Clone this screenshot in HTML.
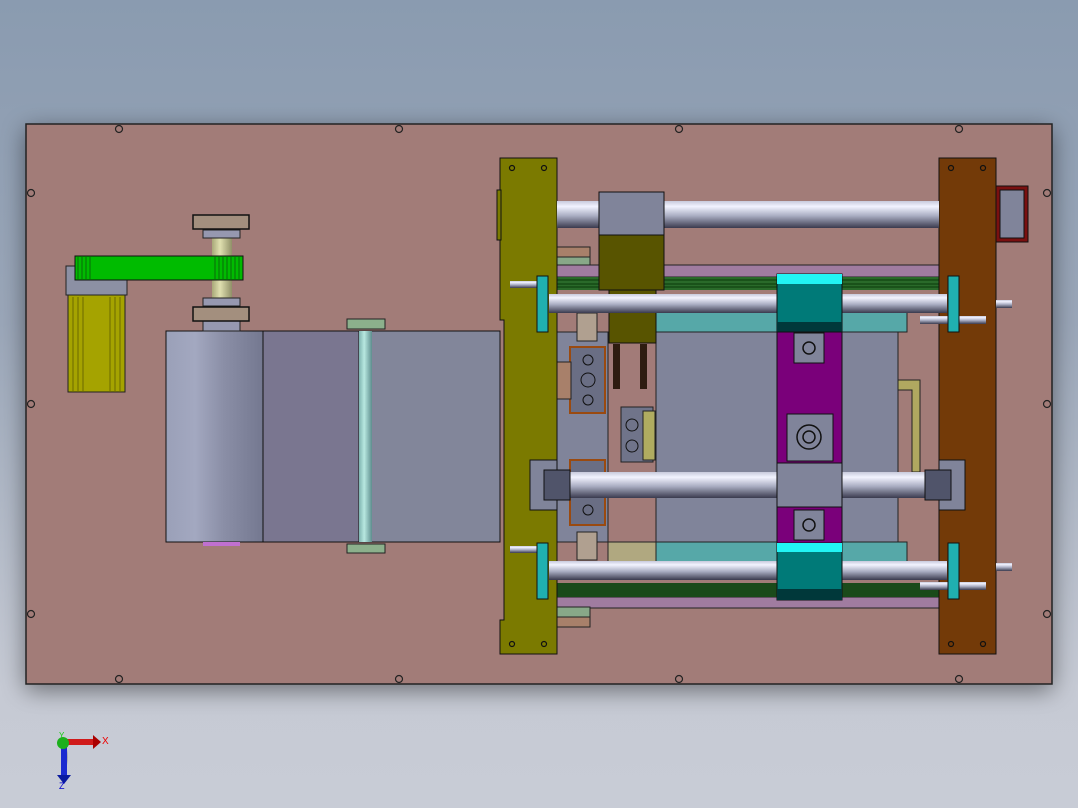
<!DOCTYPE html>
<html><head><meta charset="utf-8"><style>
html,body{margin:0;padding:0;width:1078px;height:808px;overflow:hidden;background:linear-gradient(#8a9bb0 0%,#9aa6b8 40%,#c6cad4 85%,#c8ccd6 100%);font-family:"Liberation Sans",sans-serif}
</style></head><body>
<svg width="1078" height="808" viewBox="0 0 1078 808" xmlns="http://www.w3.org/2000/svg">
<defs>
<linearGradient id="rod" x1="0" y1="0" x2="0" y2="1">
<stop offset="0" stop-color="#c8cadc"/><stop offset=".2" stop-color="#f2f3ff"/><stop offset=".55" stop-color="#a9adc2"/><stop offset="1" stop-color="#3a3a4e"/></linearGradient>
<linearGradient id="cyl" x1="0" y1="0" x2="1" y2="0">
<stop offset="0" stop-color="#9aa0b8"/><stop offset=".3" stop-color="#a3a8c0"/><stop offset=".6" stop-color="#8a8ea6"/><stop offset="1" stop-color="#747890"/></linearGradient>
<linearGradient id="vrod" x1="0" y1="0" x2="1" y2="0">
<stop offset="0" stop-color="#7fb4b0"/><stop offset=".4" stop-color="#b8e8e0"/><stop offset="1" stop-color="#5e8e8e"/></linearGradient>
<linearGradient id="shaft" x1="0" y1="0" x2="1" y2="0">
<stop offset="0" stop-color="#a8a878"/><stop offset=".4" stop-color="#e0e0b0"/><stop offset="1" stop-color="#909068"/></linearGradient>
<filter id="sh" x="-10%" y="-10%" width="120%" height="130%"><feDropShadow dx="0" dy="6" stdDeviation="12" flood-color="#000" flood-opacity=".45"/></filter>
</defs>
<rect x="26" y="124" width="1026" height="560" fill="#a27b78" stroke="#222" stroke-width="1.5" filter="url(#sh)"/>
<g fill="none" stroke="#222" stroke-width="1.2">
<circle cx="119" cy="129" r="3.5"/><circle cx="399" cy="129" r="3.5"/><circle cx="679" cy="129" r="3.5"/><circle cx="959" cy="129" r="3.5"/>
<circle cx="119" cy="679" r="3.5"/><circle cx="399" cy="679" r="3.5"/><circle cx="679" cy="679" r="3.5"/><circle cx="959" cy="679" r="3.5"/>
<circle cx="31" cy="193" r="3.5"/><circle cx="31" cy="404" r="3.5"/><circle cx="31" cy="614" r="3.5"/>
<circle cx="1047" cy="193" r="3.5"/><circle cx="1047" cy="404" r="3.5"/><circle cx="1047" cy="614" r="3.5"/>
</g>
<rect x="166" y="331" width="97" height="211" fill="url(#cyl)" stroke="#111"/>
<rect x="203" y="542" width="37" height="4" fill="#c070d0"/>
<rect x="263" y="331" width="96" height="211" fill="#7a7690" stroke="#111"/>
<rect x="359" y="331" width="141" height="211" fill="#82869a" stroke="#111"/>
<rect x="359" y="331" width="13" height="211" fill="url(#vrod)"/>
<rect x="347" y="319" width="38" height="10" fill="#8cb08c" stroke="#222"/>
<rect x="347" y="544" width="38" height="9" fill="#8cb08c" stroke="#222"/>
<rect x="68" y="295" width="57" height="97" fill="#a5a300" stroke="#222"/>
<path d="M73 297V392M78 297V392M83 297V392M110 297V392M115 297V392M120 297V392" stroke="#6a6800" stroke-width="1"/>
<rect x="66" y="266" width="61" height="29" fill="#8c90a4" stroke="#222"/>
<rect x="212" y="237" width="20" height="61" fill="url(#shaft)"/>
<rect x="203" y="230" width="37" height="8" fill="#9698b0" stroke="#222"/>
<rect x="203" y="298" width="37" height="8" fill="#9698b0" stroke="#222"/>
<rect x="203" y="321" width="37" height="10" fill="#9698b0" stroke="#222"/>
<rect x="193" y="215" width="56" height="14" fill="#a38f7e" stroke="#111" stroke-width="1.5"/>
<rect x="193" y="307" width="56" height="14" fill="#a38f7e" stroke="#111" stroke-width="1.5"/>
<rect x="75" y="256" width="168" height="24" fill="#00bb00" stroke="#111"/>
<path d="M78 257V279M82 257V279M86 257V279M90 257V279M215 257V279M219 257V279M223 257V279M227 257V279M231 257V279M235 257V279M239 257V279" stroke="#0a6a0a"/>
<rect x="557" y="265" width="382" height="12" fill="#a07ca0" stroke="#222"/>
<rect x="557" y="277" width="382" height="13" fill="#2a6a2a"/>
<path d="M557 280H939M557 284H939M557 287H939" stroke="#0a3a0a"/>
<rect x="557" y="597" width="382" height="11" fill="#a07ca0" stroke="#222"/>
<rect x="557" y="583" width="382" height="14" fill="#1a4a1a"/>
<rect x="557" y="247" width="33" height="10" fill="#a8806a" stroke="#222"/>
<rect x="557" y="257" width="33" height="8" fill="#88a888" stroke="#222"/>
<rect x="557" y="607" width="33" height="10" fill="#88a888" stroke="#222"/>
<rect x="557" y="617" width="33" height="10" fill="#a8806a" stroke="#222"/>
<rect x="557" y="332" width="51" height="210" fill="#80849a" stroke="#222"/>
<rect x="608" y="332" width="48" height="210" fill="#a27b78" stroke="#222"/>
<rect x="613" y="344" width="7" height="45" fill="#2e1c10"/>
<rect x="640" y="344" width="7" height="45" fill="#2e1c10"/>
<rect x="656" y="332" width="242" height="210" fill="#80849a" stroke="#222"/>
<rect x="656" y="312" width="251" height="20" fill="#56a8a8" stroke="#222"/>
<rect x="656" y="542" width="251" height="20" fill="#56a8a8" stroke="#222"/>
<rect x="608" y="542" width="48" height="20" fill="#b0a880" stroke="#222"/>
<path d="M898 380H920V472H912V390H898Z" fill="#b0a860" stroke="#222"/>
<rect x="570" y="347" width="35" height="66" fill="#6a6e84" stroke="#9a4a10" stroke-width="2"/>
<rect x="570" y="460" width="35" height="65" fill="#6a6e84" stroke="#9a4a10" stroke-width="2"/>
<rect x="557" y="362" width="14" height="37" fill="#a8806a" stroke="#222"/>
<rect x="577" y="313" width="20" height="28" fill="#b0a090" stroke="#222"/>
<rect x="577" y="532" width="20" height="28" fill="#b0a090" stroke="#222"/>
<rect x="621" y="407" width="32" height="55" fill="#70748a" stroke="#222"/>
<rect x="643" y="411" width="12" height="49" fill="#b0ac60" stroke="#222"/>
<g fill="none" stroke="#111"><circle cx="588" cy="360" r="5"/><circle cx="588" cy="380" r="7"/><circle cx="588" cy="400" r="5"/><circle cx="632" cy="425" r="6"/><circle cx="632" cy="446" r="6"/><circle cx="588" cy="510" r="5"/></g>
<!-- plates -->
<path d="M500 158H557V654H500V620H504V320H500Z" fill="#7b7a00" stroke="#111"/>
<rect x="497" y="190" width="4" height="50" fill="#7b7a00" stroke="#111"/>
<rect x="939" y="158" width="57" height="496" fill="#733a08" stroke="#111"/>
<rect x="996" y="186" width="32" height="56" fill="#7a1010" stroke="#111"/>
<rect x="1000" y="190" width="24" height="48" fill="#80849a" stroke="#111"/>
<g fill="none" stroke="#111" stroke-width="1.2">
<circle cx="512" cy="168" r="2.5"/><circle cx="544" cy="168" r="2.5"/><circle cx="512" cy="644" r="2.5"/><circle cx="544" cy="644" r="2.5"/>
<circle cx="951" cy="168" r="2.5"/><circle cx="983" cy="168" r="2.5"/><circle cx="951" cy="644" r="2.5"/><circle cx="983" cy="644" r="2.5"/>
</g>
<rect x="557" y="201" width="382" height="27" fill="url(#rod)"/>
<rect x="599" y="192" width="65" height="43" fill="#80849a" stroke="#111"/>
<rect x="599" y="235" width="65" height="55" fill="#585400" stroke="#111"/>
<rect x="609" y="290" width="47" height="53" fill="#585400" stroke="#111"/>
<rect x="549" y="294" width="398" height="19" fill="url(#rod)"/>
<rect x="570" y="472" width="367" height="26" fill="url(#rod)"/>
<rect x="549" y="561" width="398" height="19" fill="url(#rod)"/>
<rect x="777" y="274" width="65" height="58" fill="#007a78" stroke="#111"/>
<rect x="777" y="274" width="65" height="10" fill="#22f4f4"/>
<rect x="777" y="322" width="65" height="10" fill="#00383a"/>
<rect x="777" y="332" width="65" height="131" fill="#7a007a" stroke="#111"/>
<rect x="777" y="463" width="65" height="44" fill="#80849a" stroke="#111"/>
<rect x="777" y="507" width="65" height="36" fill="#7a007a" stroke="#111"/>
<rect x="777" y="543" width="65" height="57" fill="#007a78" stroke="#111"/>
<rect x="777" y="543" width="65" height="9" fill="#22f4f4"/>
<rect x="777" y="589" width="65" height="11" fill="#00383a"/>
<rect x="794" y="333" width="30" height="30" fill="#80849a" stroke="#111"/>
<rect x="787" y="414" width="46" height="47" fill="#80849a" stroke="#111"/>
<rect x="794" y="510" width="30" height="30" fill="#80849a" stroke="#111"/>
<g fill="none" stroke="#111" stroke-width="1.5"><circle cx="809" cy="348" r="6"/><circle cx="809" cy="437" r="12"/><circle cx="809" cy="437" r="6"/><circle cx="809" cy="525" r="6"/></g>
<rect x="510" y="281" width="27" height="7" fill="url(#rod)"/>
<rect x="510" y="546" width="27" height="7" fill="url(#rod)"/>
<rect x="920" y="316" width="66" height="8" fill="url(#rod)"/>
<rect x="920" y="582" width="66" height="8" fill="url(#rod)"/>
<rect x="537" y="276" width="11" height="56" fill="#20b0b0" stroke="#111"/>
<rect x="948" y="276" width="11" height="56" fill="#20b0b0" stroke="#111"/>
<rect x="537" y="543" width="11" height="56" fill="#20b0b0" stroke="#111"/>
<rect x="948" y="543" width="11" height="56" fill="#20b0b0" stroke="#111"/>
<rect x="530" y="460" width="27" height="50" fill="#80849a" stroke="#111"/>
<rect x="544" y="470" width="26" height="30" fill="#50546a" stroke="#111"/>
<rect x="939" y="460" width="26" height="50" fill="#80849a" stroke="#111"/>
<rect x="925" y="470" width="26" height="30" fill="#50546a" stroke="#111"/>
<rect x="996" y="300" width="16" height="8" fill="url(#rod)"/>
<rect x="996" y="563" width="16" height="8" fill="url(#rod)"/>
<!-- triad -->
<path d="M64 742 A30 30 0 0 1 64 772 Z" fill="#777" opacity=".4"/>
<rect x="61" y="744" width="6" height="32" fill="#1a2ad0"/>
<path d="M57 775H71L64 784Z" fill="#0a1aa0"/>
<rect x="64" y="739" width="30" height="6" fill="#d01a1a"/>
<path d="M93 735V749L101 742Z" fill="#a00"/>
<circle cx="63" cy="743" r="6" fill="#1cb01c"/>
<text x="102" y="744" font-size="10" fill="#e00">X</text>
<text x="59" y="789" font-size="9" fill="#00c">Z</text>
<text x="59" y="738" font-size="8" fill="#1c1">Y</text>
</svg>
</body></html>
